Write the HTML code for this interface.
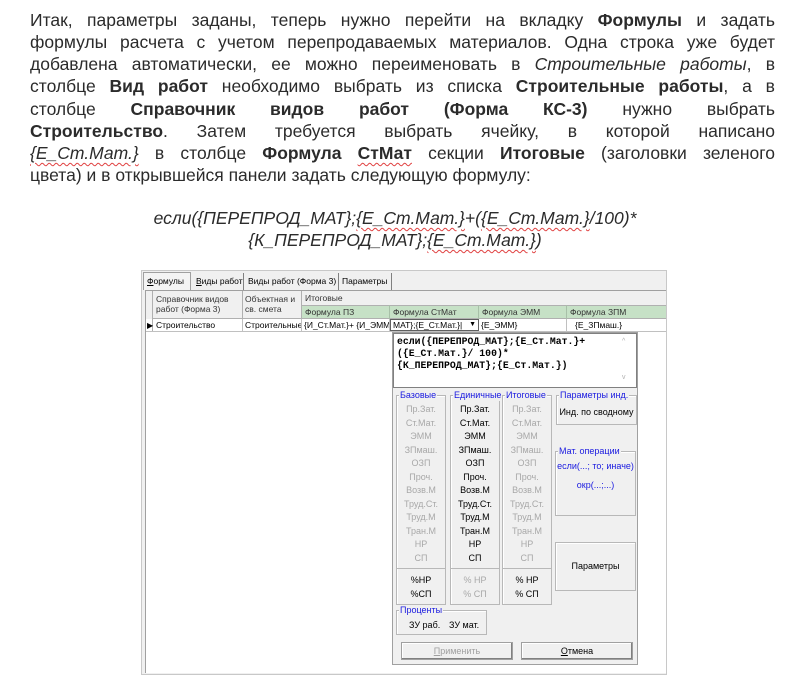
<!DOCTYPE html>
<html><head><meta charset="utf-8"><style>
*{margin:0;padding:0;box-sizing:border-box}
body{width:802px;height:686px;background:#fff;position:relative;overflow:hidden;font-family:"Liberation Sans",Arial,sans-serif}
.t{position:absolute;left:30px;width:745px;font-size:17.5px;line-height:22px;height:22px;color:#2b2b2b;white-space:nowrap;text-align:justify;text-align-last:justify}
.nl{text-align-last:left}
.w{text-decoration:underline wavy #e04040;text-decoration-thickness:1px;text-underline-offset:3px}
.f{position:absolute;left:0;width:790px;text-align:center;font-size:17.5px;line-height:22px;font-style:italic;color:#2b2b2b}
.a{position:absolute}
.d{font-size:8.5px;color:#000;font-family:"Liberation Sans",Arial,sans-serif}
.g{position:absolute;border:1px solid #b8b8b8;box-shadow:inset 1px 1px 0 #fff}
.gl{position:absolute;top:-6px;left:2px;background:#f0f0f0;color:#1a1ae0;font-size:9px;padding:0 1px;line-height:11px;white-space:nowrap}
.it{position:absolute;width:100%;text-align:center;font-size:9px;line-height:11px;white-space:nowrap}
.dis{color:#a8a8a8}
.btn{position:absolute;background:#f0f0f0;border:1px solid #a0a0a0;box-shadow:inset -1px -1px 0 #808080,inset 1px 1px 0 #fff;font-size:9px;text-align:center;white-space:nowrap}
</style></head><body>
<div class="t" style="top:9px">Итак, параметры заданы, теперь нужно перейти на вкладку <b>Формулы</b> и задать</div>
<div class="t" style="top:31px">формулы расчета с учетом перепродаваемых материалов. Одна строка уже будет</div>
<div class="t" style="top:53px">добавлена автоматически, ее можно переименовать в <i>Строительные работы</i>, в</div>
<div class="t" style="top:75px">столбце <b>Вид работ</b> необходимо выбрать из списка <b>Строительные работы</b>, а в</div>
<div class="t" style="top:98px">столбце <b>Справочник видов работ (Форма КС-3)</b> нужно выбрать</div>
<div class="t" style="top:120px"><b>Строительство</b>. Затем требуется выбрать ячейку, в которой написано</div>
<div class="t" style="top:142px"><i><span class="w">{Е_Ст.Мат.}</span></i> в столбце <b>Формула <span class="w">СтМат</span></b> секции <b>Итоговые</b> (заголовки зеленого</div>
<div class="t nl" style="top:164px">цвета) и в открывшейся панели задать следующую формулу:</div>
<div class="f" style="top:207px">если({ПЕРЕПРОД_МАТ};<span class="w">{Е_Ст.Мат.}</span>+(<span class="w">{Е_Ст.Мат.}</span>/100)*</div>
<div class="f" style="top:229px">{К_ПЕРЕПРОД_МАТ};<span class="w">{Е_Ст.Мат.}</span>)</div>

<div class="a" style="left:141px;top:270px;width:526px;height:405px;background:#f0f0f0;border:1px solid #c8c8c8"></div>
<div class="a d" style="left:143px;top:272px;height:18px;line-height:17px;width:520px;white-space:nowrap">
<span class="a" style="left:0;top:0;width:48px;height:18px;border:1px solid #a0a0a0;border-bottom:none;background:#f4f4f4;padding-left:3px"><u>Ф</u>ормулы</span>
<span class="a" style="left:51px;top:1px;padding-left:2px;border-right:1px solid #808080;width:50px"><u>В</u>иды работ</span>
<span class="a" style="left:103px;top:1px;padding-left:2px;border-right:1px solid #808080;width:93px">Виды работ (Форма 3)</span>
<span class="a" style="left:197px;top:1px;padding-left:2px;border-right:1px solid #808080;width:52px">Параметры</span>
</div>
<div class="a" style="left:145px;top:290px;width:521px;height:383px;background:#fff;border-left:1px solid #a0a0a0;border-top:1px solid #a0a0a0"></div>
<div class="a" style="left:146px;top:291px;width:520px;height:28px;background:#f0f0f0"></div>
<div class="a" style="left:146px;top:291px;width:7px;height:40px;border-right:1px solid #b0b0b0"></div>
<div class="a d" style="left:153px;top:291px;width:90px;height:28px;border-right:1px solid #b0b0b0;border-bottom:1px solid #b0b0b0;padding:3px 0 0 3px;line-height:10px;color:#333">Справочник видов<br>работ (Форма 3)</div>
<div class="a d" style="left:243px;top:291px;width:59px;height:28px;border-right:1px solid #b0b0b0;border-bottom:1px solid #b0b0b0;padding:3px 0 0 2px;line-height:10px;color:#333">Объектная и<br>св. смета</div>
<div class="a d" style="left:302px;top:291px;width:364px;height:14px;padding:2px 0 0 3px;line-height:10px;color:#333">Итоговые</div>
<div class="a" style="left:302px;top:305px;width:364px;height:14px;background:#c6e1c6;border-top:1px solid #b0b0b0;border-bottom:1px solid #b0b0b0"></div>
<div class="a d" style="left:302px;top:305px;width:88px;height:14px;border-right:1px solid #a8c0a8;padding:2px 0 0 3px;line-height:10px;color:#333">Формула ПЗ</div>
<div class="a d" style="left:390px;top:305px;width:89px;height:14px;border-right:1px solid #a8c0a8;padding:2px 0 0 3px;line-height:10px;color:#333">Формула СтМат</div>
<div class="a d" style="left:479px;top:305px;width:88px;height:14px;border-right:1px solid #a8c0a8;padding:2px 0 0 3px;line-height:10px;color:#333">Формула ЭММ</div>
<div class="a d" style="left:567px;top:305px;width:99px;height:14px;padding:2px 0 0 3px;line-height:10px;color:#333">Формула ЗПМ</div>
<div class="a" style="left:146px;top:331px;width:520px;height:1px;background:#c0c0c0"></div>
<div class="a d" style="left:147px;top:320px;font-size:8px;line-height:11px">▶</div>
<div class="a d" style="left:153px;top:319px;width:90px;height:12px;border-right:1px solid #c0c0c0;padding-left:3px;line-height:12px">Строительство</div>
<div class="a d" style="left:243px;top:319px;width:59px;height:12px;border-right:1px solid #c0c0c0;padding-left:2px;line-height:12px;overflow:hidden;white-space:nowrap">Строительные</div>
<div class="a d" style="left:302px;top:319px;width:88px;height:12px;border-right:1px solid #c0c0c0;padding-left:2px;line-height:12px;overflow:hidden;white-space:nowrap">{И_Ст.Мат.}+ {И_ЭММ}</div>
<div class="a d" style="left:390px;top:319px;width:89px;height:12px;border:1px solid #606060;padding-left:2px;line-height:10px;overflow:hidden;white-space:nowrap">МАТ};{Е_Ст.Мат.}|<span style="position:absolute;right:2px;font-size:7px">▼</span></div>
<div class="a d" style="left:479px;top:319px;width:88px;height:12px;border-right:1px solid #c0c0c0;padding-left:2px;line-height:12px">{Е_ЭММ}</div>
<div class="a d" style="left:567px;top:319px;width:99px;height:12px;padding-left:8px;line-height:12px">{Е_ЗПмаш.}</div>
<div class="a" style="left:392px;top:332px;width:246px;height:333px;background:#f0f0f0;border:1px solid #a0a0a0"></div>
<div class="a" style="left:393px;top:333px;width:244px;height:55px;background:#fff;border:1px solid #808080"></div>
<div class="a" style="left:397px;top:336px;font-family:'Liberation Mono',monospace;font-weight:bold;font-size:9.8px;line-height:12px;color:#000;white-space:pre">если({ПЕРЕПРОД_МАТ};{Е_Ст.Мат.}+
({Е_Ст.Мат.}/ 100)*
{К_ПЕРЕПРОД_МАТ};{Е_Ст.Мат.})</div>
<div class="a" style="left:622px;top:338px;font-size:7px;color:#b0b0b0">^</div>
<div class="a" style="left:622px;top:374px;font-size:7px;color:#b0b0b0">v</div>

<div class="g" style="left:396px;top:395px;width:50px;height:210px"><span class="gl">Базовые</span>
<div class="a" style="left:0;top:172px;width:48px;height:1px;background:#b8b8b8"></div>
<div class="it dis" style="top:8px">Пр.Зат.</div><div class="it dis" style="top:21.5px">Ст.Мат.</div><div class="it dis" style="top:35px">ЭММ</div><div class="it dis" style="top:48.5px">ЗПмаш.</div><div class="it dis" style="top:62px">ОЗП</div><div class="it dis" style="top:75.5px">Проч.</div><div class="it dis" style="top:89px">Возв.М</div><div class="it dis" style="top:102.5px">Труд.Ст.</div><div class="it dis" style="top:116px">Труд.М</div><div class="it dis" style="top:129.5px">Тран.М</div><div class="it dis" style="top:143px">НР</div><div class="it dis" style="top:156.5px">СП</div>
<div class="it" style="top:179px">%НР</div><div class="it" style="top:193px">%СП</div></div>

<div class="g" style="left:450px;top:395px;width:50px;height:210px"><span class="gl">Единичные</span>
<div class="a" style="left:0;top:172px;width:48px;height:1px;background:#b8b8b8"></div>
<div class="it" style="top:8px">Пр.Зат.</div><div class="it" style="top:21.5px">Ст.Мат.</div><div class="it" style="top:35px">ЭММ</div><div class="it" style="top:48.5px">ЗПмаш.</div><div class="it" style="top:62px">ОЗП</div><div class="it" style="top:75.5px">Проч.</div><div class="it" style="top:89px">Возв.М</div><div class="it" style="top:102.5px">Труд.Ст.</div><div class="it" style="top:116px">Труд.М</div><div class="it" style="top:129.5px">Тран.М</div><div class="it" style="top:143px">НР</div><div class="it" style="top:156.5px">СП</div>
<div class="it dis" style="top:179px">% НР</div><div class="it dis" style="top:193px">% СП</div></div>

<div class="g" style="left:502px;top:395px;width:50px;height:210px"><span class="gl">Итоговые</span>
<div class="a" style="left:0;top:172px;width:48px;height:1px;background:#b8b8b8"></div>
<div class="it dis" style="top:8px">Пр.Зат.</div><div class="it dis" style="top:21.5px">Ст.Мат.</div><div class="it dis" style="top:35px">ЭММ</div><div class="it dis" style="top:48.5px">ЗПмаш.</div><div class="it dis" style="top:62px">ОЗП</div><div class="it dis" style="top:75.5px">Проч.</div><div class="it dis" style="top:89px">Возв.М</div><div class="it dis" style="top:102.5px">Труд.Ст.</div><div class="it dis" style="top:116px">Труд.М</div><div class="it dis" style="top:129.5px">Тран.М</div><div class="it dis" style="top:143px">НР</div><div class="it dis" style="top:156.5px">СП</div>
<div class="it" style="top:179px">% НР</div><div class="it" style="top:193px">% СП</div></div>

<div class="g" style="left:556px;top:395px;width:81px;height:30px"><span class="gl">Параметры инд.</span>
<div class="it" style="top:11px">Инд. по сводному</div></div>
<div class="g" style="left:555px;top:451px;width:81px;height:65px"><span class="gl">Мат. операции</span>
<div class="it" style="top:9px;color:#1a1ae0">если(...; то; иначе)</div>
<div class="it" style="top:28px;color:#1a1ae0">окр(...;...)</div></div>
<div class="g" style="left:555px;top:542px;width:81px;height:49px">
<div class="it" style="top:18px">Параметры</div></div>
<div class="g" style="left:396px;top:610px;width:91px;height:25px"><span class="gl">Проценты</span>
<div class="a d" style="left:12px;top:9px;font-size:9px">ЗУ раб.</div><div class="a d" style="left:52px;top:9px;font-size:9px">ЗУ мат.</div></div>
<div class="btn" style="left:401px;top:642px;width:112px;height:18px;line-height:16px;color:#a0a0a0"><u>П</u>рименить</div>
<div class="btn" style="left:521px;top:642px;width:112px;height:18px;line-height:16px;color:#000"><u>О</u>тмена</div>
</body></html>
